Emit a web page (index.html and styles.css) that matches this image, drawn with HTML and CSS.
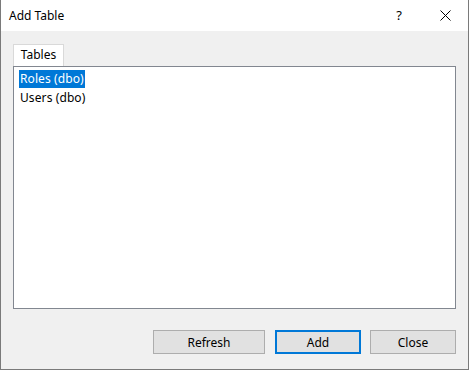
FILE: index.html
```html
<!DOCTYPE html>
<html lang="en">

<head>
    <meta charset="UTF-8" />
    <title>Add Table</title>
    <link rel="stylesheet" href="styles.css">
</head>

<body>
    <div class="dialog">
        <div class="titlebar">
            <span class="caption">Add Table</span>
            <span class="help">?</span>
            <span class="close">
                <svg width="11" height="11" viewBox="0 0 11 11">
                    <path d="M0.5 0.5 L10.5 10.5 M10.5 0.5 L0.5 10.5" stroke="#000" stroke-width="1" fill="none" />
                </svg>
            </span>
        </div>

        <div class="content">
            <div class="tabs">
                <span class="tab">Tables</span>
            </div>
            <ul class="listbox">
                <li><span class="selected">Roles (dbo)</span></li>
                <li><span>Users (dbo)</span></li>
            </ul>

            <div class="buttons">
                <button class="btn btn-wide">Refresh</button>
                <button class="btn btn-default">Add</button>
                <button class="btn">Close</button>
            </div>
        </div>
    </div>
</body>

</html>
```

FILE: styles.css
```css
html,
body {
    margin: 0;
    padding: 0;
}

body {
    font-family: "Noto Sans", "Open Sans", sans-serif;
    font-size: 12px;
    color: #000000;
    background: #f0f0f0;
}

.dialog {
    width: 469px;
    height: 370px;
    box-sizing: border-box;
    border: 1px solid #7a7a7a;
    border-top: none;
    display: flex;
    flex-direction: column;
    background: #f0f0f0;
}

.titlebar {
    height: 31px;
    background: #ffffff;
    display: flex;
    align-items: center;
    padding-left: 8px;
}

.caption {
    flex: 1;
    margin-top: -1px;
}

.help {
    width: 46px;
    text-align: center;
    font-size: 13px;
    margin-top: -1px;
}

.close {
    width: 46px;
    height: 31px;
    display: flex;
    align-items: center;
    justify-content: center;
}

.close svg {
    display: block;
}

.content {
    flex: 1;
    padding: 13px 12px 0;
    display: flex;
    flex-direction: column;
}

.tabs {
    display: flex;
    height: 22px;
}

.tab {
    width: 51px;
    box-sizing: border-box;
    height: 22px;
    background: #ffffff;
    border: 1px solid #d9d9d9;
    border-bottom: none;
    text-align: center;
    line-height: 20px;
}

.listbox {
    list-style: none;
    margin: 0;
    padding: 3px 0 0 5px;
    height: 243px;
    box-sizing: border-box;
    background: #ffffff;
    border: 1px solid #828790;
}

.listbox li {
    height: 19px;
    line-height: 18px;
}

.listbox li span {
    display: inline-block;
    padding: 0 1px;
    height: 18px;
    letter-spacing: 0.1px;
}

.listbox .selected {
    background: #0078d7;
    color: #ffffff;
}

.buttons {
    display: flex;
    justify-content: flex-end;
    gap: 10px;
    margin-top: 21px;
}

.btn {
    font-family: inherit;
    font-size: 12px;
    width: 86px;
    height: 24px;
    background: #e1e1e1;
    border: 1px solid #adadad;
    color: #000000;
    padding: 0;
}

.btn-wide {
    width: 112px;
}

.btn-default {
    border: 2px solid #0078d7;
    margin-right: -1px;
}
```
